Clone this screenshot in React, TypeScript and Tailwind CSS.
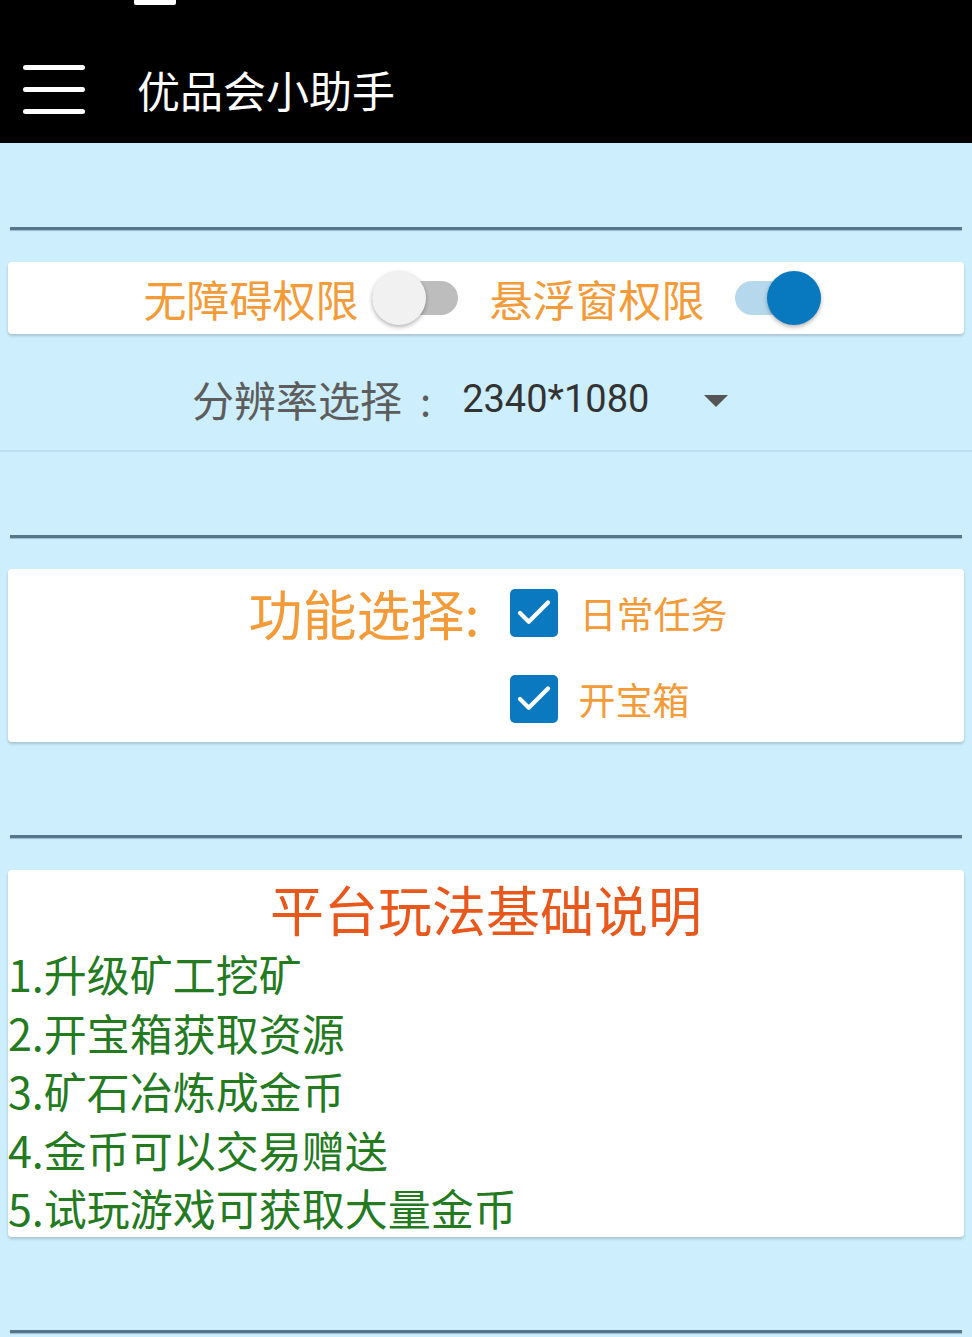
import { Check } from "lucide-react";

const cjk = "font-['Noto_Sans_CJK_SC',sans-serif]";

function Divider({ className = "" }: { className?: string }) {
  return (
    <div
      className={`mx-[10px] h-[3px] bg-[#56748a] shadow-[0_1px_1px_rgba(70,110,140,0.4)] ${className}`}
    />
  );
}

function Switch({ on }: { on: boolean }) {
  return (
    <div className="relative h-[54px] w-[86px] shrink-0">
      <div
        className={`absolute left-0 right-0 top-[10px] h-[34px] rounded-full ${
          on ? "bg-[#b6d8ec]" : "bg-[#bdbdbd]"
        }`}
      />
      <div
        className={`absolute top-0 h-[54px] w-[54px] rounded-full shadow-[0_2px_4px_rgba(0,0,0,0.3)] ${
          on ? "right-0 bg-[#0979bf]" : "left-0 bg-[#f1f1f1]"
        }`}
      />
    </div>
  );
}

function CheckBox() {
  return (
    <div className="flex h-[48px] w-[48px] shrink-0 items-center justify-center rounded-[5px] bg-[#0b79bf]">
      <Check className="h-[42px] w-[42px] text-white" strokeWidth={2.4} />
    </div>
  );
}

const rules = [
  "1.升级矿工挖矿",
  "2.开宝箱获取资源",
  "3.矿石冶炼成金币",
  "4.金币可以交易赠送",
  "5.试玩游戏可获取大量金币",
];

export default function App() {
  return (
    <div className={`flex min-h-[1337px] flex-col bg-[#cdeefc] ${cjk}`}>
      {/* app bar */}
      <header className="flex h-[143px] flex-col bg-black">
        <div className="ml-[134px] h-[5px] w-[42px] rounded-b-[2px] bg-white" />
        <div className="flex flex-1 items-center pb-[2px] pt-[33px]">
          <div className="ml-[23px] flex flex-col gap-[17px]">
            <span className="block h-[5px] w-[62px] rounded-full bg-white" />
            <span className="block h-[5px] w-[62px] rounded-full bg-white" />
            <span className="block h-[5px] w-[62px] rounded-full bg-white" />
          </div>
          <h1 className="ml-[52px] text-[43px] leading-none text-white">优品会小助手</h1>
        </div>
      </header>

      <Divider className="mt-[84px]" />

      {/* permissions */}
      <section className="mx-[8px] mt-[32px] flex h-[72px] items-center justify-center rounded-[4px] bg-white pr-[8px] shadow-[0_2px_3px_rgba(0,0,0,0.18)]">
        <span className="text-[43px] leading-none text-[#f29b38]">无障碍权限</span>
        <div className="ml-[13px]">
          <Switch on={false} />
        </div>
        <span className="ml-[32px] text-[43px] leading-none text-[#f29b38]">悬浮窗权限</span>
        <div className="ml-[30px]">
          <Switch on />
        </div>
      </section>

      {/* resolution */}
      <div className="mt-[9px] flex h-[109px] items-center border-b-2 border-[#bcdff0] pl-[192px] pt-[4px]">
        <span className="text-[42px] leading-none text-[#5d5d5d]">分辨率选择</span>
        <span className="ml-[18px] text-[40px] leading-none text-[#5d5d5d]">:</span>
        <span className="ml-[31px] font-['Roboto',sans-serif] text-[38px] leading-none text-[#333]">
          2340*1080
        </span>
        <svg className="ml-[54px] mt-[4px]" width="26" height="14" viewBox="0 0 26 14">
          <path d="M1 1 L25 1 L13 13 Z" fill="#555" />
        </svg>
      </div>

      <Divider className="mt-[83px]" />

      {/* features */}
      <section className="mx-[8px] mt-[31px] flex h-[173px] justify-center rounded-[4px] bg-white pt-[19px] shadow-[0_2px_3px_rgba(0,0,0,0.18)]">
        <div className="grid grid-cols-[auto_auto] grid-rows-[50px_50px] gap-x-[30px] gap-y-[36px] pl-[4px]">
          <span className="flex h-[50px] items-center text-[54px] leading-none text-[#f29b38]">
            功能选择:
          </span>
          <div className="flex h-[50px] items-center gap-[22px]">
            <CheckBox />
            <span className="text-[37px] leading-none text-[#f29b38]">日常任务</span>
          </div>
          <span />
          <div className="flex h-[50px] items-center gap-[21px]">
            <CheckBox />
            <span className="text-[37px] leading-none text-[#f29b38]">开宝箱</span>
          </div>
        </div>
      </section>

      <Divider className="mt-[93px]" />

      {/* rules */}
      <section className="mx-[8px] mt-[32px] rounded-[4px] bg-white pt-[9px] shadow-[0_2px_3px_rgba(0,0,0,0.18)]">
        <h2 className="text-center text-[54px] leading-[60px] text-[#e8581c]">平台玩法基础说明</h2>
        <ul className="mt-[5px]">
          {rules.map((r) => (
            <li key={r} className="text-[43px] leading-[58.5px] text-[#237a1f]">
              {r}
            </li>
          ))}
        </ul>
      </section>

      <Divider className="mt-[93px]" />
    </div>
  );
}
